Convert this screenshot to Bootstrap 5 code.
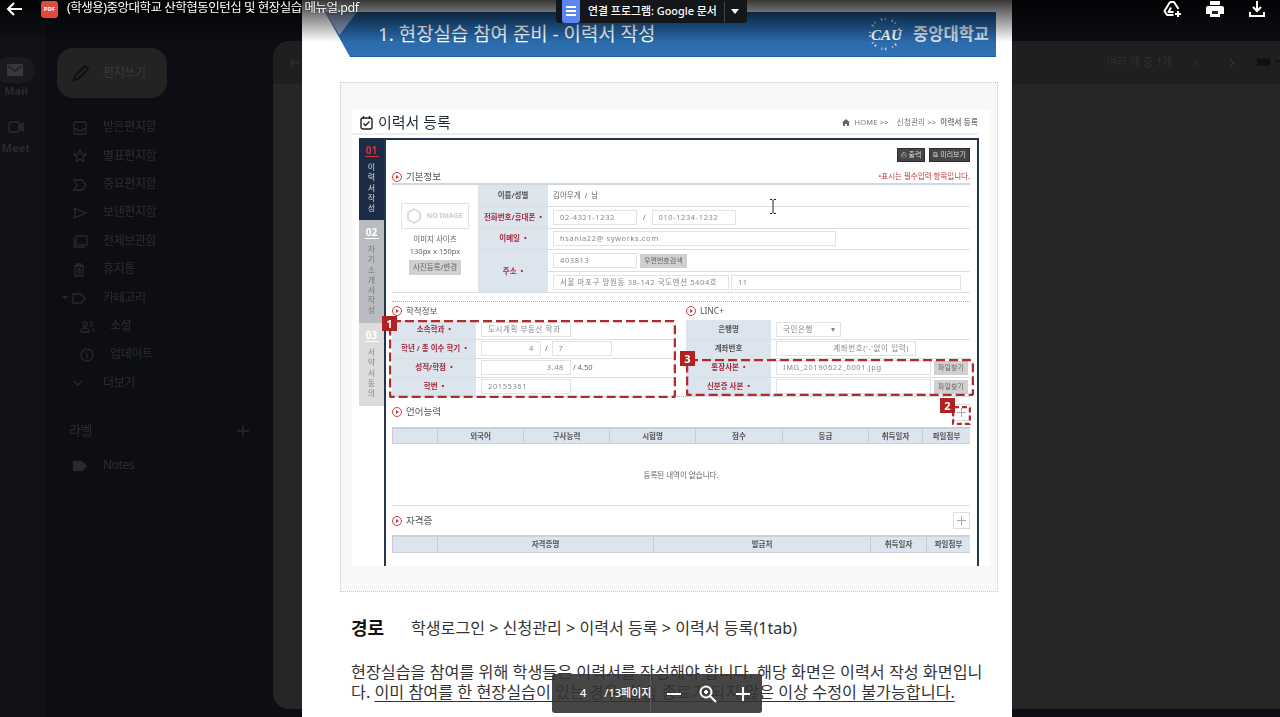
<!DOCTYPE html>
<html lang="ko">
<head>
  <meta charset="UTF-8">
  <title>(학생용)중앙대학교 산학협동인턴십 및 현장실습 메뉴얼.pdf</title>
  <link href="https://cdn.jsdelivr.net/npm/bootstrap@5.3.3/dist/css/bootstrap.min.css" rel="stylesheet">
  <style>
    html, body { height: 100%; overflow: hidden; }
    body { background: #0c0e13; font-family: "Noto Sans", "Noto Sans CJK KR", sans-serif; color: #2d2e31; }

    /* gmail behind the viewer */
    .mail-base { height: 717px; filter: blur(.4px); }
    .mail-rail { width: 46px; background: #101216; padding: 57px 14px 0 0; font-size: 11px; font-weight: 700; color: #2a2b2e; text-align: center; }
    .rail-pill { width: 40px; height: 26px; margin-left: -5px; border-radius: 13px; background: #1a1b1f; display: flex; align-items: center; justify-content: center; }
    .rail-cam { height: 26px; margin-top: 14px; }
    .mail-side { width: 227px; padding: 48px 0 0 11px; font-size: 12px; letter-spacing: -.4px; }
    .compose-btn { width: 110px; height: 50px; border-radius: 16px; background: #232323; padding-left: 15px; gap: 13px; color: #3a3a3a; }
    .side-list { margin: 15px 0 0; padding: 0; list-style: none; }
    .side-list li { height: 28.4px; display: flex; align-items: center; }
    .side-ico { width: 46px; padding-left: 16px; flex: none; }
    .side-ico.with-caret { padding-left: 5px; }
    .side-sub { padding-left: 7px; }
    .label-head { width: 180px; margin: 24px 0 16px 12px; font-size: 13px; }
    .mail-panel { flex: 1; margin-top: 41px; margin-bottom: 8px; border-radius: 16px 0 0 16px; background: #262626; overflow: hidden; }
    .panel-bar { height: 43px; background: #1f1f1f; padding-left: 17px; font-size: 11px; color: #2f3033; }
    .count-text { margin-left: 808px; white-space: nowrap; }

    /* pdf viewer */
    .pdf-page { position: absolute; left: 302px; top: 0; width: 710px; height: 717px; background: #fff; overflow: hidden; padding-top: 12px; color: #222; }
    .top-shade { position: absolute; left: 0; top: 0; width: 100%; height: 42px; background: linear-gradient(rgba(0,0,0,.78), rgba(0,0,0,0)); }
    .top-row { position: absolute; left: 0; top: 0; width: 100%; height: 20px; color: #fff; font-size: 12.5px; }
    .top-row > * { position: absolute; }
    .pdf-tag { left: 41px; top: 1px; width: 17px; height: 17px; border-radius: 3px; background: #e2483c; font-size: 6px; font-weight: 700; line-height: 17px; text-align: center; }
    .pdf-name { left: 67px; top: -2px; line-height: 20px; white-space: nowrap; letter-spacing: -.5px; text-shadow: 0 0 2px #000; }
    .open-chip { position: absolute; left: 556px; top: 0; width: 191px; height: 23px; background: #14161a; border-radius: 0 0 3px 3px; color: #fff; font-size: 10.9px; font-weight: 500; }
    .docs-ico { width: 18px; height: 23px; margin-left: 6px; background: #5a86ef; border-radius: 0 0 3px 3px; padding: 6px 4px 0; }
    .docs-ico i { display: block; height: 2px; background: #fff; margin-bottom: 2px; }
    .chip-sep { width: 1px; height: 20px; background: #44474c; margin-left: 7px; }
    .chip-caret { width: 0; height: 0; margin-left: 6px; border: 4px solid transparent; border-top: 5px solid #fff; border-bottom: 0; }
    .page-bar { position: absolute; left: 552px; top: 674px; width: 210px; height: 39px; border-radius: 3px; background: rgba(50,50,50,.9); color: #fff; font-size: 11px; font-weight: 500; }
    .page-num { width: 99px; height: 100%; border-right: 1px solid #5b5b5b; padding-left: 28px; gap: 18px; }

    /* document */
    .doc-banner { position: relative; margin-left: 23px; width: 671px; height: 45px; background: linear-gradient(#1c5a96, #3273b5); border-bottom: 1px solid #1c63ad; clip-path: polygon(0 0, 100% 0, 100% 100%, 25px 100%); color: #fff; padding-left: 53px; font-size: 18.9px; }
    .fold-tip { position: absolute; left: 0; top: 0; width: 32px; height: 23px; background: #8da0c0; clip-path: polygon(0 0, 100% 0, 45% 100%); }
    .uni-mark { margin-left: auto; margin-right: 7px; gap: 7px; font-size: 16.5px; font-weight: 700; color: #d4e0ee; }
    .cau-text { font-size: 15px; font-style: italic; font-weight: 700; fill: #fff; font-family: "Liberation Serif", serif; }
    .shot-box { margin: 25px 0 0 38px; width: 658px; height: 510px; background: #f8f8f8; border: 1px dotted #c8c8c8; padding: 27px 0 0 11px; }
    .shot { position: relative; width: 638px; height: 456px; background: #fff; overflow: hidden; font-size: 7.5px; color: #666; filter: blur(.35px); }
    .shot-head { height: 25px; margin-right: 12px; padding-left: 8px; padding-top: 2px; border-bottom: 2px solid #eee; }
    .shot-title { font-size: 15px; color: #1e2a3a; margin-left: 5px; }
    .crumb { margin-left: auto; font-size: 7.5px; color: #777; letter-spacing: .2px; gap: 4px; }
    .shot-frame { margin: 3px 11px 0 7px; }
    .step-col { width: 25px; flex: none; text-align: center; font-size: 8px; line-height: 10.2px; }
    .step-col b { display: block; width: 14px; margin: 0 auto 5px; padding: 7px 0 1px; font-size: 10px; border-bottom: 1px solid currentColor; }
    .step-one { height: 82px; background: #1c2c47; color: #ddd; }
    .step-one b { color: #d8353a; }
    .step-two { height: 103px; background: #b9bdc2; color: #777; }
    .step-two b { color: #fff; }
    .step-three { height: 83px; background: #dcdcdc; color: #888; }
    .step-three b { color: #fff; }
    .shot-main { flex: 1; min-width: 0; height: 430px; border: 2px solid #25344f; border-bottom: 0; padding: 8px 7px 0 6px; }
    .tool-row { height: 14px; gap: 4px; }
    .dark-btn { height: 14px; background: #454545; border: 1px solid #2c2c2c; color: #ddd; padding: 0 3px; font-size: 7px; line-height: 12px; }
    .sec-head { height: 23px; font-size: 9.5px; color: #555; }
    .sec-first { height: 23px; padding-top: 9px; border-bottom: 2px solid #cfd7e0; }
    .must-note { margin-left: auto; color: #c0393c; font-size: 7.5px; }
    .play-dot { width: 10px; height: 10px; flex: none; border: 1px solid #c8403f; border-radius: 50%; margin-right: 4px; position: relative; }
    .play-dot::after { content: ""; position: absolute; left: 3px; top: 2px; border: 2px solid transparent; border-left: 3px solid #c8403f; border-right: 0; }
    .form-tb { width: 100%; table-layout: fixed; border-collapse: collapse; }
    .form-tb th { background: #dce4ee; color: #a8283a; font-weight: 700; text-align: center; font-size: 7.5px; padding: 0; }
    .form-tb th.plain-th { color: #555; }
    .form-tb td { padding: 0 0 0 5px; white-space: nowrap; }
    .form-tb tr { border-bottom: 1px solid #ddd; }
    .base-tb tr { height: 21.6px; }
    .sub-tb tr { height: 19px; }
    .fld { display: inline-block; height: 15px; line-height: 13px; border: 1px solid #e2e2e2; padding: 0 6px; vertical-align: middle; color: #888; letter-spacing: .6px; overflow: hidden; }
    .fld-end { text-align: right; }
    .grey-btn { display: inline-block; height: 14px; line-height: 14px; background: #d0d0d0; color: #666; padding: 0 4px; margin-left: 3px; vertical-align: middle; font-size: 7px; }
    .photo-cell { text-align: center; color: #666; padding: 0 !important; white-space: normal !important; line-height: 12px; }
    .no-image { width: 68px; height: 26px; margin: 0 auto 4px; border: 1px solid #e2e2e2; color: #ccc; font-weight: 700; font-size: 7px; gap: 5px; }
    .photo-btn { display: inline-block; background: #d0d0d0; height: 15px; line-height: 15px; padding: 0 4px; margin-top: 3px; }
    .dot-line { height: 9px; border-bottom: 1px dotted #aaa; }
    .sub-head { height: 18px; font-size: 8.5px; color: #555; }
    .sub-wrap { gap: 10px; border-bottom: 1px dotted #aaa; height: 95px; }
    .sub-wrap > div { width: 284px; flex: none; }
    .plus-btn { margin-left: auto; width: 17px; height: 17px; border: 1px solid #ddd; position: relative; }
    .plus-btn::before, .plus-btn::after { content: ""; position: absolute; background: #aaa; }
    .plus-btn::before { left: 3px; right: 3px; top: 7px; height: 1px; }
    .plus-btn::after { top: 3px; bottom: 3px; left: 7px; width: 1px; }
    .list-head { height: 30px; font-size: 9.5px; color: #555; }
    .list-grid { display: grid; height: 17px; background: #dce4ee; border-top: 2px solid #c9d1da; border-bottom: 1px solid #c9d1da; color: #555; font-weight: 700; text-align: center; line-height: 14px; }
    .list-grid span { border-left: 1px solid #c4ccd6; }
    .lang-cols { grid-template-columns: 45px 86px 86px 86px 87px 86px 54px 48px; }
    .cert-cols { grid-template-columns: 45px 216px 217px 56px 44px; }
    .empty-row { height: 62px; line-height: 62px; text-align: center; border-bottom: 1px solid #ddd; }

    /* red marks over the capture */
    .mark-box { position: absolute; fill: none; stroke: #b12a2c; stroke-width: 2.500; stroke-dasharray: 9 4; }
    .mark-tag { position: absolute; width: 15px; height: 15px; background: #b02222; color: #fff; font-size: 11px; font-weight: 700; line-height: 15px; text-align: center; }
    .ibeam { position: absolute; left: 417px; top: 89px; }

    .route-row { margin: 24px 0 0 49px; height: 24px; }
    .route-row b { font-size: 18px; color: #111; width: 60px; }
    .route-row span { font-size: 16.1px; color: #333; }
    .doc-para { margin: 22px 0 0 49px; width: 640px; font-size: 16.2px; line-height: 20px; color: #333; word-break: break-all; }
    .doc-para u { text-underline-offset: 3px; }
  </style>
</head>
<body class="position-relative">

  <div class="mail-base d-flex">
    <div class="mail-rail flex-none">
      <div class="rail-pill">
        <svg width="16" height="12" viewBox="0 0 16 12"><rect width="16" height="12" rx="1" fill="#37383b"/><path d="M1 2l7 5 7-5" fill="none" stroke="#1a1b1f" stroke-width="1.3"/></svg>
      </div>
      <div>Mail</div>
      <div class="rail-cam d-flex align-items-center justify-content-center">
        <svg width="16" height="12" viewBox="0 0 16 12" fill="none" stroke="#2a2b2e" stroke-width="1.4"><rect x="1" y="1" width="10" height="10" rx="2"/><path d="M11 5l4-3v8l-4-3" fill="#2a2b2e"/></svg>
      </div>
      <div>Meet</div>
    </div>

    <div class="mail-side flex-none">
      <div class="compose-btn d-flex align-items-center">
        <svg width="18" height="18" viewBox="0 0 18 18" fill="none" stroke="#0e0f12" stroke-width="2"><path d="M2 16l1-4L13 2l3 3L6 15z"/></svg>
        <span>편지쓰기</span>
      </div>
      <ul class="side-list">
        <li><span class="side-ico"><svg width="14" height="14" viewBox="0 0 14 14" fill="none" stroke="#292a2d" stroke-width="1.3"><rect x="1" y="1" width="12" height="12" rx="1"/><path d="M1 8h3l1.500 2h3L10 8h3"/></svg></span>받은편지함</li>
        <li><span class="side-ico"><svg width="14" height="14" viewBox="0 0 14 14" fill="none" stroke="#292a2d" stroke-width="1.3"><path d="M7 1l1.800 4 4.200.4-3.200 2.800 1 4.300L7 10.300 3.200 12.500l1-4.300L1 5.400 5.200 5z"/></svg></span>별표편지함</li>
        <li><span class="side-ico"><svg width="14" height="12" viewBox="0 0 14 12" fill="none" stroke="#292a2d" stroke-width="1.3"><path d="M1 1h8l4 5-4 5H1l3-5z"/></svg></span>중요편지함</li>
        <li><span class="side-ico"><svg width="14" height="12" viewBox="0 0 14 12" fill="none" stroke="#292a2d" stroke-width="1.3"><path d="M1 1l12 5-12 5 1.500-5z"/></svg></span>보낸편지함</li>
        <li><span class="side-ico"><svg width="15" height="13" viewBox="0 0 15 13" fill="none" stroke="#292a2d" stroke-width="1.3"><rect x="3" y="1" width="11" height="9"/><path d="M1 3v9h11"/></svg></span>전체보관함</li>
        <li><span class="side-ico"><svg width="12" height="14" viewBox="0 0 12 14" fill="none" stroke="#292a2d" stroke-width="1.3"><path d="M1 3h10M4 3V1h4v2M2 3v10h8V3M5 5v6M7 5v6"/></svg></span>휴지통</li>
        <li><span class="side-ico with-caret"><svg width="26" height="11" viewBox="0 0 26 11" fill="none" stroke="#292a2d" stroke-width="1.3"><path d="M0 3h6l-3 3z" fill="#292a2d" stroke="none"/><path d="M11 1h8l4 4.500-4 4.500h-8z"/></svg></span>카테고리</li>
        <li class="side-sub"><span class="side-ico"><svg width="15" height="12" viewBox="0 0 15 12" fill="none" stroke="#292a2d" stroke-width="1.3"><circle cx="5" cy="3" r="2.200"/><path d="M1 11V9c0-1 2-2 4-2s4 1 4 2v2zM10 1a2 2 0 010 4M12 7c1 .5 2 1 2 2v2"/></svg></span>소셜</li>
        <li class="side-sub"><span class="side-ico"><svg width="14" height="14" viewBox="0 0 14 14" fill="none" stroke="#292a2d" stroke-width="1.3"><circle cx="7" cy="7" r="6"/><path d="M7 6v4.500M7 3.500v1.200"/></svg></span>업데이트</li>
        <li><span class="side-ico"><svg width="10" height="7" viewBox="0 0 10 7" fill="none" stroke="#292a2d" stroke-width="1.3"><path d="M1 1l4 4 4-4"/></svg></span>더보기</li>
      </ul>
      <div class="label-head d-flex justify-content-between align-items-center">
        <span>라벨</span>
        <svg width="12" height="12" viewBox="0 0 12 12" stroke="#292a2d" stroke-width="1.400"><path d="M6 0v12M0 6h12"/></svg>
      </div>
      <div class="d-flex align-items-center">
        <span class="side-ico"><svg width="14" height="10" viewBox="0 0 14 10"><path d="M0 0h9l5 5-5 5H0z" fill="#292a2d"/></svg></span>Notes
      </div>
    </div>

    <div class="mail-panel">
      <div class="panel-bar d-flex align-items-center">
        <svg class="flex-none" width="10" height="10" viewBox="0 0 10 10" fill="none" stroke="#333" stroke-width="1.200"><path d="M10 5H1M5 1L1 5l4 4"/></svg>
        <span class="count-text">여러 개 중 1개</span>
        <svg class="flex-none" style="margin-left:22px" width="6" height="10" viewBox="0 0 6 10" fill="none" stroke="#2c2c2c" stroke-width="1.200"><path d="M5 1L1 5l4 4"/></svg>
        <svg class="flex-none" style="margin-left:29px" width="6" height="10" viewBox="0 0 6 10" fill="none" stroke="#3a3a3a" stroke-width="1.200"><path d="M1 1l4 4-4 4"/></svg>
        <svg class="flex-none" style="margin-left:23px" width="26" height="9" viewBox="0 0 26 9"><rect width="15" height="8" fill="#101010"/><path d="M20 2h6l-3 3z" fill="#101010"/></svg>
      </div>
    </div>
  </div>

  <div class="pdf-page">
    <div class="doc-banner d-flex align-items-center">
      <div class="fold-tip"></div>
      <span>1. 현장실습 참여 준비 - 이력서 작성</span>
      <div class="uni-mark d-flex align-items-center">
        <svg width="38" height="34" viewBox="0 0 38 34">
          <circle cx="17" cy="17" r="15" fill="none" stroke="#c5d4e6" stroke-width="2.500" stroke-dasharray="1.500 2.500 1 6"/>
          <text x="3" y="23" class="cau-text">CAU</text>
        </svg>
        <span>중앙대학교</span>
      </div>
    </div>

    <div class="shot-box">
      <div class="shot">
        <div class="shot-head d-flex align-items-center">
          <svg width="13" height="14" viewBox="0 0 13 14" fill="none" stroke="#222" stroke-width="1.400"><rect x="1" y="2" width="11" height="11" rx="2"/><path d="M3.500 0v3M9.500 0v3M3.500 7.500l2 2 4-4"/></svg>
          <span class="shot-title">이력서 등록</span>
          <span class="crumb d-flex align-items-center">
            <svg width="8" height="7" viewBox="0 0 8 7" fill="#666"><path d="M4 0l4 3.500H7V7H5V5H3v2H1V3.500H0z"/></svg>
            <span>HOME &gt;&gt;</span><span class="ms-1">신청관리 &gt;&gt;</span><b>이력서 등록</b>
          </span>
        </div>

        <div class="shot-frame d-flex">
          <div class="step-col">
            <div class="step-one"><b>01</b>이<br>력<br>서<br>작<br>성</div>
            <div class="step-two"><b>02</b>자<br>기<br>소<br>개<br>서<br>작<br>성</div>
            <div class="step-three"><b>03</b>서<br>약<br>서<br>동<br>의</div>
          </div>

          <div class="shot-main">
            <div class="tool-row d-flex justify-content-end">
              <span class="dark-btn">⎙ 출력</span>
              <span class="dark-btn">⧉ 미리보기</span>
            </div>
            <div class="sec-head sec-first d-flex align-items-center">
              <span class="play-dot"></span>기본정보
              <span class="must-note">•표시는 필수입력 항목입니다.</span>
            </div>
            <table class="form-tb base-tb">
              <colgroup><col style="width:86px"><col style="width:70px"><col></colgroup>
              <tr>
                <td class="photo-cell" rowspan="5">
                  <div class="no-image d-flex align-items-center justify-content-center">
                    <svg width="14" height="16" viewBox="0 0 14 16" fill="none" stroke="#ddd" stroke-width="2"><path d="M7 1l6 3.500v7L7 15l-6-3.500v-7z"/></svg>NO IMAGE
                  </div>
                  이미지 사이즈<br>130px x 150px<br>
                  <span class="photo-btn">사진등록/변경</span>
                </td>
                <th class="plain-th">이름/성별</th>
                <td>김아무개 &nbsp;/ &nbsp;남</td>
              </tr>
              <tr>
                <th>전화번호/휴대폰 &nbsp;•</th>
                <td><span class="fld" style="width:84px">02-4321-1232</span> &nbsp; / &nbsp; <span class="fld" style="width:84px">010-1234-1232</span></td>
              </tr>
              <tr>
                <th>이메일 &nbsp;•</th>
                <td><span class="fld" style="width:283px">hsania22@ syworks.com</span></td>
              </tr>
              <tr>
                <th rowspan="2">주소 &nbsp;•</th>
                <td><span class="fld" style="width:84px">403813</span><span class="grey-btn">우편번호검색</span></td>
              </tr>
              <tr>
                <td><span class="fld" style="width:176px">서울 마포구 망원동 38-142 국도맨션 5404호</span> <span class="fld" style="width:230px">11</span></td>
              </tr>
            </table>
            <div class="dot-line"></div>

            <div class="sub-wrap d-flex">
              <div>
                <div class="sub-head d-flex align-items-center"><span class="play-dot"></span>학적정보</div>
                <table class="form-tb sub-tb">
                  <colgroup><col style="width:84px"><col></colgroup>
                  <tr><th>소속학과 &nbsp;•</th><td><span class="fld" style="width:90px">도시계획 부동산 학과</span></td></tr>
                  <tr><th>학년 / 총 이수 학기 &nbsp;•</th><td><span class="fld fld-end" style="width:60px">4</span> &nbsp;/&nbsp; <span class="fld" style="width:60px">7</span></td></tr>
                  <tr><th>성적/학점 &nbsp;•</th><td><span class="fld fld-end" style="width:90px">3.48</span> / 4.50</td></tr>
                  <tr><th>학번 &nbsp;•</th><td><span class="fld" style="width:90px">20155361</span></td></tr>
                </table>
              </div>
              <div>
                <div class="sub-head d-flex align-items-center"><span class="play-dot"></span>LINC+</div>
                <table class="form-tb sub-tb">
                  <colgroup><col style="width:85px"><col></colgroup>
                  <tr><th class="plain-th">은행명</th><td><span class="fld" style="width:65px">국민은행 &nbsp; &nbsp; &nbsp; ▾</span></td></tr>
                  <tr><th class="plain-th">계좌번호</th><td><span class="fld fld-end" style="width:140px">계좌번호('-'없이 입력)</span></td></tr>
                  <tr><th>통장사본 &nbsp;•</th><td><span class="fld" style="width:155px">IMG_20190622_0001.jpg</span><span class="grey-btn">파일찾기</span></td></tr>
                  <tr><th>신분증 사본 &nbsp;•</th><td><span class="fld" style="width:155px"></span><span class="grey-btn">파일찾기</span></td></tr>
                </table>
              </div>
            </div>

            <div class="list-head d-flex align-items-center">
              <span class="play-dot"></span>언어능력
              <span class="plus-btn"></span>
            </div>
            <div class="list-grid lang-cols">
              <span></span><span>외국어</span><span>구사능력</span><span>시험명</span><span>점수</span><span>등급</span><span>취득일자</span><span>파일첨부</span>
            </div>
            <div class="empty-row">등록된 내역이 없습니다.</div>

            <div class="list-head d-flex align-items-center" style="height:29px">
              <span class="play-dot"></span>자격증
              <span class="plus-btn"></span>
            </div>
            <div class="list-grid cert-cols" style="height:18px">
              <span></span><span>자격증명</span><span>발급처</span><span>취득일자</span><span>파일첨부</span>
            </div>
          </div>
        </div>

        <svg class="mark-box" style="left:37px;top:210px" width="287" height="78"><rect x="1" y="1" width="285" height="76" rx="2"/></svg>
        <div class="mark-tag" style="left:30px;top:206px">1</div>
        <svg class="mark-box" style="left:334px;top:249px" width="288" height="37"><rect x="1" y="1" width="286" height="35" rx="2"/></svg>
        <div class="mark-tag" style="left:328px;top:241px">3</div>
        <svg class="mark-box" style="left:600px;top:296px" width="19" height="19"><rect x="1" y="1" width="17" height="17" rx="1" stroke-dasharray="5 3"/></svg>
        <div class="mark-tag" style="left:588px;top:288px">2</div>
        <svg class="ibeam" width="8" height="15" viewBox="0 0 8 15" fill="none" stroke="#222" stroke-width="1"><path d="M1 .5h2l1 1 1-1h2M4 1.500v12M1 14.500h2l1-1 1 1h2"/></svg>
      </div>
    </div>

    <div class="route-row d-flex align-items-center">
      <b>경로</b>
      <span>학생로그인 &gt; 신청관리 &gt; 이력서 등록 &gt; 이력서 등록(1tab)</span>
    </div>
    <p class="doc-para">현장실습을 참여를 위해 학생들은 이력서를 작성해야 합니다. 해당 화면은 이력서 작성 화면입니다. <u>이미 참여를 한 현장실습이 있는 경우, 실습 종료가 되지 않은 이상 수정이 불가능합니다.</u></p>
  </div>

  <div class="top-shade"></div>
  <div class="top-row">
    <svg style="left:6px;top:1px" width="16" height="16" viewBox="0 0 16 16" fill="none" stroke="#fff" stroke-width="2"><path d="M16 8H2M8 2L2 8l6 6"/></svg>
    <span class="pdf-tag">PDF</span>
    <span class="pdf-name">(학생용)중앙대학교 산학협동인턴십 및 현장실습 메뉴얼.pdf</span>
    <svg style="left:1163px;top:0" width="20" height="18" viewBox="0 0 20 18" fill="none" stroke="#fff" stroke-width="2" stroke-linejoin="round"><path d="M7 2h4l4.500 7M7 2L1.500 11 4 15h6.500M8 7.500L5.500 12h5"/><path d="M15 11v6M12 14h6"/></svg>
    <svg style="left:1206px;top:1px" width="18" height="16" viewBox="0 0 18 16" fill="#fff"><path d="M4 0h10v4H4zM2 5h14a2 2 0 012 2v6h-4v3H4v-3H0V7a2 2 0 012-2z"/><rect x="6" y="10" width="6" height="3" fill="#222"/></svg>
    <svg style="left:1249px;top:1px" width="16" height="16" viewBox="0 0 16 16" fill="none" stroke="#fff" stroke-width="2"><path d="M8 0v10M4 6l4 4 4-4M1 11v4h14v-4"/></svg>
  </div>

  <div class="open-chip d-flex align-items-center">
    <div class="docs-ico flex-none"><i></i><i></i><i></i></div>
    <span class="ms-2 text-nowrap">연결 프로그램: Google 문서</span>
    <span class="chip-sep flex-none"></span>
    <span class="chip-caret flex-none"></span>
  </div>

  <div class="page-bar d-flex align-items-center">
    <div class="page-num d-flex align-items-center"><span>4</span><span class="text-nowrap">/13페이지</span></div>
    <svg class="ms-3" width="14" height="2" viewBox="0 0 14 2"><rect width="14" height="2" fill="#fff"/></svg>
    <svg style="margin-left:18px" width="18" height="18" viewBox="0 0 18 18" fill="none" stroke="#fff" stroke-width="2"><circle cx="7" cy="7" r="5.500"/><path d="M11 11l6 6M5 7h4M7 5v4"/></svg>
    <svg style="margin-left:19px" width="14" height="14" viewBox="0 0 14 14" stroke="#fff" stroke-width="2"><path d="M7 0v14M0 7h14"/></svg>
  </div>

  <script src="https://cdn.jsdelivr.net/npm/bootstrap@5.3.3/dist/js/bootstrap.bundle.min.js"></script>
</body>
</html>
